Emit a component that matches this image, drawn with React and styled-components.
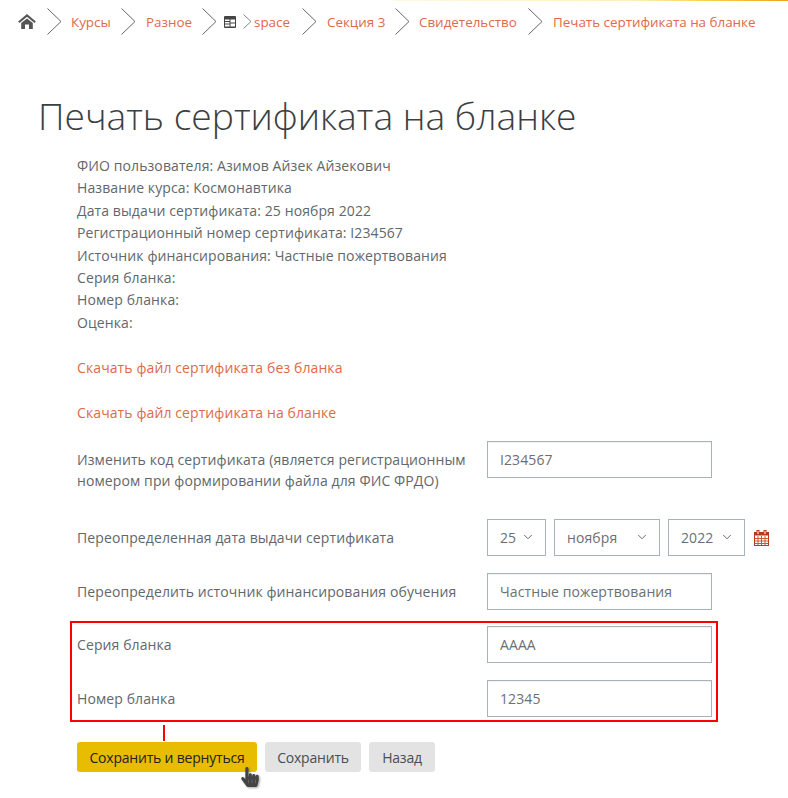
import React from "react";
import styled, { createGlobalStyle } from "styled-components";
import { FaHandPointer } from "react-icons/fa";
import { ChevronDown } from "lucide-react";

const fontStack = `"Open Sans", "Noto Sans", sans-serif`;

const GlobalStyle = createGlobalStyle`
  html, body {
    margin: 0;
    padding: 0;
    background: #fff;
    font-family: ${fontStack};
    overflow: hidden;
  }
`;

const Page = styled.div`
  position: relative;
  width: 788px;
  height: 798px;
  overflow: hidden;
  color: #62676b;
  font-size: 14px;
  letter-spacing: 0.1px;
`;

const TopStrip = styled.div`
  position: absolute;
  top: 0;
  left: 393px;
  right: 0;
  height: 1px;
  background: linear-gradient(to right, #fff8e0 0%, #fdf0c0 60%, #f5d04a 80%, #f0a020 100%);
`;

// Breadcrumb
const Crumbs = styled.nav`
  display: flex;
  align-items: center;
  height: 27px;
  padding: 8px 0 0 18px;
  font-size: 13.4px;
  letter-spacing: 0;
`;
const HomeLink = styled.span`
  display: flex;
  width: 18px;
  margin-right: 11px;
`;
const CrumbLink = styled.span`
  color: #dc6a4b;
  white-space: nowrap;
  width: ${(props) => props.$width}px;
  margin: 0 ${(props) => props.$right ?? 10}px 0 ${(props) => props.$left ?? 9}px;
`;
const Sep = styled.svg`
  flex: none;
  display: block;
`;
const TableSep = styled(Sep)`
  margin: 0 7px;
`;
function Chevron({ small }) {
  const w = small ? 9 : 15;
  const h = small ? 15 : 27;
  return (
    <Sep width={w} height={h} viewBox={`0 0 ${w} ${h}`}>
      <polyline points={`0.5,0.5 ${w - 1},${h / 2} 0.5,${h - 0.5}`} fill="none" stroke={small ? "#888" : "#666"} strokeWidth="1" />
    </Sep>
  );
}
function HomeIcon() {
  return (
    <Sep width="18" height="15" viewBox="0 0 18 15">
      <polyline points="0.8,8.2 9,1.4 17.2,8.2" fill="none" stroke="#555" strokeWidth="2" />
      <path d="M3.2 9 L9 4.4 L14.8 9 V15 H11 V10.5 H7 V15 H3.2 Z" fill="#555" />
    </Sep>
  );
}
function TableIcon() {
  return (
    <TableSep width="12" height="12" viewBox="0 0 12 12">
      <rect width="12" height="12" rx="1" fill="#444" />
      <rect x="1" y="3.5" width="4.5" height="1.5" fill="#fff" />
      <rect x="1" y="6" width="4.5" height="1.5" fill="#fff" />
      <rect x="1" y="8.5" width="4.5" height="2" fill="#fff" />
      <rect x="6.5" y="3.5" width="4.5" height="3" fill="#fff" />
      <rect x="6.5" y="7.5" width="4.5" height="3" fill="#fff" />
    </TableSep>
  );
}

// Main content
const Title = styled.h1`
  margin: 54px 0 0 38px;
  font-size: 37.2px;
  font-weight: 300;
  line-height: 54px;
  color: #3c3f42;
  letter-spacing: 0;
`;
const Content = styled.div`
  margin: 12px 0 0 77px;
  width: 680px;
`;
const InfoLine = styled.div`
  line-height: 22.4px;
  height: 22.4px;
  white-space: nowrap;
`;
const DownloadLink = styled.div`
  color: #dc6a4b;
  line-height: 22.4px;
  margin-top: ${(props) => props.$top}px;
`;
const Row = styled.div`
  display: flex;
  align-items: flex-start;
  margin-top: ${(props) => props.$top ?? 0}px;
  margin-bottom: ${(props) => props.$bottom ?? 17}px;
`;
const Label = styled.div`
  width: 410px;
  flex: none;
  line-height: 21px;
  padding: 8px 0;
  box-sizing: border-box;
`;
const TextInput = styled.input`
  width: 225px;
  height: 37px;
  box-sizing: border-box;
  border: 1.5px solid #a8b2bb;
  padding: 0 12px;
  font: inherit;
  color: #6b6f73;
  letter-spacing: inherit;
  background: #fff;
  outline: none;
  box-shadow: inset 0 1px 1px rgba(0, 0, 0, 0.06);
`;
const DateGroup = styled.div`
  display: flex;
  align-items: center;
  gap: 8px;
`;
const SelectBox = styled.div`
  position: relative;
  width: ${(props) => props.$width}px;
  height: 37px;
  box-sizing: border-box;
  border: 1.5px solid #a8b2bb;
  padding-left: 12px;
  display: flex;
  align-items: center;
  color: #6b6f73;
  svg {
    position: absolute;
    right: 10px;
    top: 10px;
    color: #555;
  }
`;
const CalendarIcon = styled.svg`
  display: block;
  flex: none;
  margin-left: 1px;
`;
const Highlight = styled.div`
  position: relative;
  border: 2px solid #f00;
  margin: 11px 0 0 -7px;
  width: 648px;
  box-sizing: border-box;
  padding: 3px 4px 3px 5px;
`;
const HighlightStub = styled.div`
  position: absolute;
  left: 91px;
  bottom: -21px;
  width: 2px;
  height: 16px;
  background: #f00;
`;
const Buttons = styled.div`
  display: flex;
  gap: 8px;
  margin-top: 20px;
`;
const Button = styled.div`
  position: relative;
  height: 30px;
  width: ${(props) => props.$width}px;
  box-sizing: border-box;
  display: flex;
  align-items: center;
  justify-content: center;
  border-radius: 3px;
  letter-spacing: -0.2px;
  background: ${(props) => (props.$primary ? "#e8bc00" : "#e3e3e3")};
  color: ${(props) => (props.$primary ? "#222" : "#4a4e52")};
  white-space: nowrap;
`;
const Cursor = styled.span`
  position: absolute;
  left: 163px;
  top: 25px;
  display: flex;
  color: #444;
  font-size: 20px;
  filter: drop-shadow(1px 1px 1px rgba(0, 0, 0, 0.35));
`;

function Calendar() {
  return (
    <CalendarIcon width="15" height="16" viewBox="0 0 15 16">
      <rect x="0.5" y="2.5" width="14" height="13" fill="#fff" stroke="#b83a1c" />
      <rect x="0.5" y="2.5" width="14" height="3" fill="#b83a1c" />
      <rect x="3" y="0.5" width="2" height="4" fill="#fff" stroke="#b83a1c" strokeWidth="1" />
      <rect x="10" y="0.5" width="2" height="4" fill="#fff" stroke="#b83a1c" strokeWidth="1" />
      <path d="M4 6v9M7.5 6v9M11 6v9M1 8.5h13M1 11h13M1 13.5h13" stroke="#c9573a" strokeWidth="1" />
    </CalendarIcon>
  );
}

const info = [
  "ФИО пользователя: Азимов Айзек Айзекович",
  "Название курса: Космонавтика",
  "Дата выдачи сертификата: 25 ноября 2022",
  "Регистрационный номер сертификата: I234567",
  "Источник финансирования: Частные пожертвования",
  "Серия бланка:",
  "Номер бланка:",
  "Оценка:",
];

export default function App() {
  return (
    <Page>
      <GlobalStyle />
      <TopStrip />
      <Crumbs>
        <HomeLink><HomeIcon /></HomeLink>
        <Chevron />
        <CrumbLink $width={41} $right={9}>Курсы</CrumbLink>
        <Chevron />
        <CrumbLink $width={46} $left={10}>Разное</CrumbLink>
        <Chevron />
        <TableIcon />
        <Chevron small />
        <CrumbLink $width={38} $left={2}>space</CrumbLink>
        <Chevron />
        <CrumbLink $width={58} $left={10}>Секция 3</CrumbLink>
        <Chevron />
        <CrumbLink $width={99}>Свидетельство</CrumbLink>
        <Chevron />
        <CrumbLink $width={200} $left={10}>Печать сертификата на бланке</CrumbLink>
      </Crumbs>

      <Title>Печать сертификата на бланке</Title>

      <Content>
        {info.map((line) => (
          <InfoLine key={line}>{line}</InfoLine>
        ))}
        <DownloadLink $top={22.4}>Скачать файл сертификата без бланка</DownloadLink>
        <DownloadLink $top={23}>Скачать файл сертификата на бланке</DownloadLink>

        <Row $bottom={20} $top={17}>
          <Label>
            Изменить код сертификата (является регистрационным<br />
            номером при формировании файла для ФИС ФРДО)
          </Label>
          <TextInput readOnly value="I234567" />
        </Row>
        <Row>
          <Label>Переопределенная дата выдачи сертификата</Label>
          <DateGroup>
            <SelectBox $width={59}>25<ChevronDown size={14} strokeWidth={1.5} /></SelectBox>
            <SelectBox $width={106}>ноября<ChevronDown size={14} strokeWidth={1.5} /></SelectBox>
            <SelectBox $width={77}>2022<ChevronDown size={14} strokeWidth={1.5} /></SelectBox>
            <Calendar />
          </DateGroup>
        </Row>
        <Row $bottom={0}>
          <Label>Переопределить источник финансирования обучения</Label>
          <TextInput readOnly value="Частные пожертвования" />
        </Row>

        <Highlight>
          <Row>
            <Label>Серия бланка</Label>
            <TextInput readOnly value="АААА" />
          </Row>
          <Row $bottom={0}>
            <Label>Номер бланка</Label>
            <TextInput readOnly value="12345" />
          </Row>
          <HighlightStub />
        </Highlight>

        <Buttons>
          <Button $primary $width={180}>
            Сохранить и вернуться
            <Cursor><FaHandPointer /></Cursor>
          </Button>
          <Button $width={96}>Сохранить</Button>
          <Button $width={66}>Назад</Button>
        </Buttons>
      </Content>
    </Page>
  );
}
